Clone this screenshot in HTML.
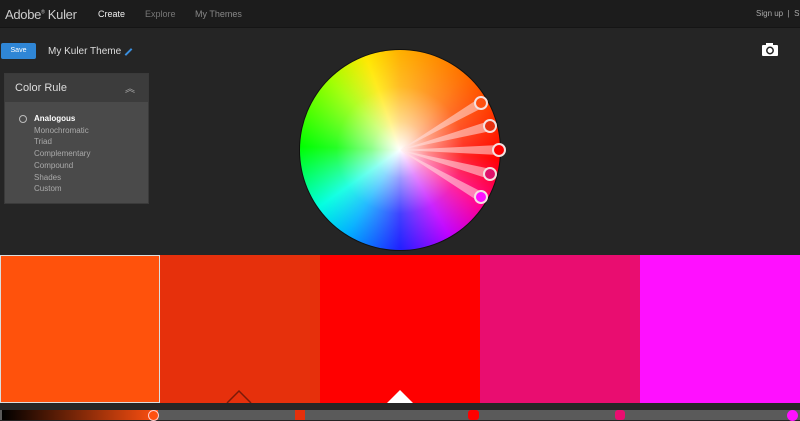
<!DOCTYPE html>
<html><head><style>
*{margin:0;padding:0;box-sizing:border-box}
body{width:800px;height:420px;overflow:hidden;background:#252525;font-family:"Liberation Sans",sans-serif;position:relative;color:#ddd}
.nav{position:absolute;left:0;top:0;width:800px;height:28px;background:#1c1c1c;border-bottom:1px solid #151515}
.abs{position:absolute;white-space:nowrap}
.panel{position:absolute;left:4px;top:73px;width:145px;height:131px;background:#4a4a4a;border:1px solid #3a3a3a}
.ph{height:28px;background:#3c3c3c}
.sw{position:absolute;top:255px;height:148px;width:160px}
</style></head><body>
<div class="nav">
<div class="abs" style="left:5px;top:7px;font-size:13px;color:#ccc;letter-spacing:-0.3px">Adobe<sup style="font-size:5px">®</sup> Kuler</div>
<div class="abs" style="left:98px;top:9px;font-size:9px;color:#eee">Create</div>
<div class="abs" style="left:145px;top:9px;font-size:9px;color:#777">Explore</div>
<div class="abs" style="left:195px;top:9px;font-size:9px;color:#888">My Themes</div>
<div class="abs" style="left:756px;top:9px;font-size:8px;color:#aaa">Sign up &nbsp;|&nbsp; Sig</div>
</div>
<div class="abs" style="left:1px;top:43px;width:35px;height:16px;background:#2f86d6;border-radius:2px;font-size:7px;color:#fff;text-align:center;line-height:16px">Save</div>
<div class="abs" style="left:48px;top:46px;font-size:10px;color:#ddd">My Kuler Theme</div>
<div class="abs" style="left:124px;top:51px;width:9px;height:2px;background:#3a8fe0;transform:rotate(-45deg)"></div>
<svg class="abs" style="left:761px;top:42px" width="18" height="15"><rect x="1" y="3" width="16" height="11" rx="1" fill="#fff"/><rect x="5" y="1" width="7" height="3" fill="#fff"/><circle cx="9" cy="8.5" r="3.2" fill="none" stroke="#222" stroke-width="1.5"/></svg>
<div class="panel"><div class="ph"><div class="abs" style="left:10px;top:8px;font-size:11px;color:#ddd">Color Rule</div><div class="abs" style="left:120px;top:6px;font-size:10px;color:#aaa">︽</div></div>
<div class="abs" style="left:14px;top:41px;width:8px;height:8px;border:1px solid #bbb;border-radius:50%"></div>
<div class="abs" style="left:29px;top:39px;font-size:8px;line-height:11.7px;color:#aaa"><b style="color:#fff">Analogous</b><br>Monochromatic<br>Triad<br>Complementary<br>Compound<br>Shades<br>Custom</div>
</div>
<div class="abs" style="left:299px;top:49px;width:202px;height:202px;border-radius:50%;background:#111"></div>
<div class="abs" style="left:300px;top:50px;width:200px;height:200px;border-radius:50%;background:conic-gradient(#ffb000 0deg,#ff7000 40deg,#ff2000 80deg,#ff0000 95deg,#ff0090 125deg,#c000ff 150deg,#2020ff 180deg,#00b0ff 212deg,#00ffe0 235deg,#00ff00 272deg,#a0ff00 315deg,#ffe800 340deg,#ffb000 360deg)"></div>
<div class="abs" style="left:300px;top:50px;width:200px;height:200px;border-radius:50%;background:radial-gradient(circle,#fff 0%,rgba(255,255,255,.55) 20%,rgba(255,255,255,.15) 45%,rgba(255,255,255,0) 70%)"></div>
<svg class="abs" style="left:0;top:0" width="800" height="260">
<g fill="rgba(255,225,225,.55)">
<path d="M400 150 L478 99 L484 107Z"/><path d="M400 150 L489 121 L491 131Z"/><path d="M400 150 L499 145 L499 155Z"/><path d="M400 150 L491 169 L489 179Z"/><path d="M400 150 L484 193 L478 201Z"/></g>
<g stroke="#f5e0e0" stroke-width="2">
<circle cx="481" cy="103" r="6" fill="#ff5010"/><circle cx="490" cy="126" r="6" fill="#e83010"/><circle cx="499" cy="150" r="6" fill="#ff0000"/><circle cx="490" cy="174" r="6" fill="#e0106a"/><circle cx="481" cy="197" r="6" fill="#ff10ff"/></g>
</svg>
<div class="sw" style="left:0;background:#ff520c;border:1px solid #ddd"></div>
<div class="sw" style="left:160px;background:#e6300c"></div>
<div class="sw" style="left:320px;background:#ff0000"></div>
<div class="sw" style="left:480px;background:#e90d70"></div>
<div class="sw" style="left:640px;background:#ff10ff"></div>
<svg class="abs" style="left:226px;top:389px" width="28" height="15"><path d="M1 14 L13 2 L25 14" fill="none" stroke="#7a1a0a" stroke-width="1.5"/></svg>
<svg class="abs" style="left:387px;top:389px" width="26" height="14"><path d="M0 14 L13 1 L26 14Z" fill="#fff"/></svg>
<div class="abs" style="left:0;top:403px;width:800px;height:7px;background:#262626"></div>
<div class="abs" style="left:0;top:410px;width:800px;height:10px;background:#5a5a5a"></div>
<div class="abs" style="left:2px;top:410px;width:156px;height:10px;background:linear-gradient(90deg,#000,#ff5010)"></div>
<div class="abs" style="left:148px;top:410px;width:11px;height:11px;border-radius:50%;background:#ff5010;border:1px solid #fcc"></div>
<div class="abs" style="left:295px;top:410px;width:10px;height:10px;background:#e6300c"></div>
<div class="abs" style="left:468px;top:410px;width:11px;height:10px;border-radius:3px;background:#ff0000"></div>
<div class="abs" style="left:615px;top:410px;width:10px;height:10px;border-radius:3px;background:#e90d70"></div>
<div class="abs" style="left:787px;top:410px;width:11px;height:11px;border-radius:50%;background:#ff10ff"></div>
</body></html>
